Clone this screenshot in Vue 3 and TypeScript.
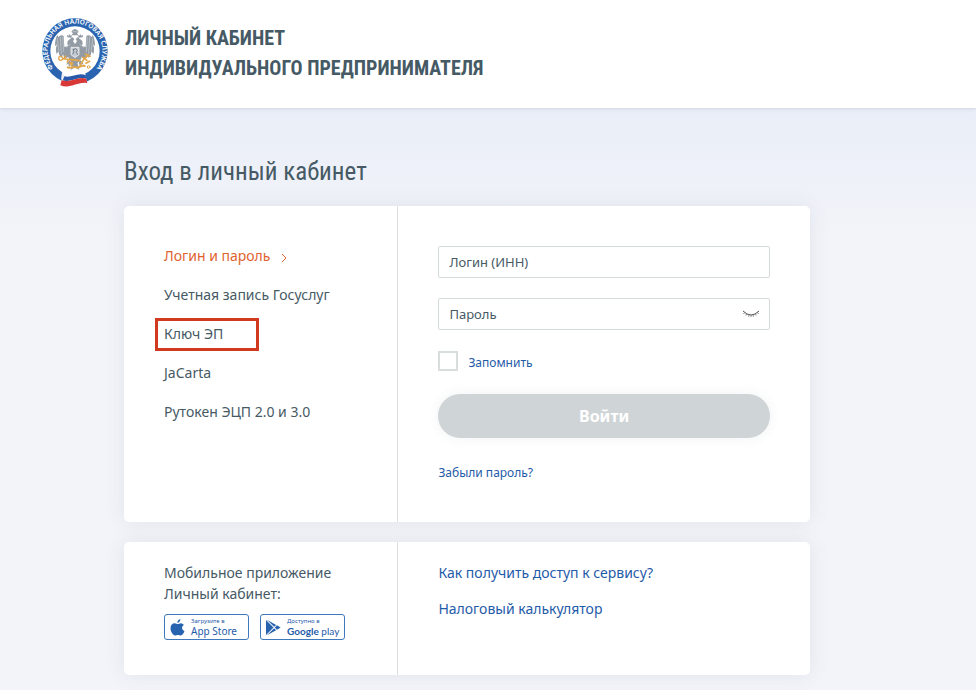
<script setup lang="ts">
import { ref } from 'vue'

interface LoginMethod {
  id: string
  title: string
}

const methods: LoginMethod[] = [
  { id: 'password', title: 'Логин и пароль' },
  { id: 'gosuslugi', title: 'Учетная запись Госуслуг' },
  { id: 'key', title: 'Ключ ЭП' },
  { id: 'jacarta', title: 'JaCarta' },
  { id: 'rutoken', title: 'Рутокен ЭЦП 2.0 и 3.0' },
]

const active = ref('password')
const marked = 'key'
const login = ref('')
const password = ref('')
const remember = ref(false)
const passwordVisible = ref(false)
</script>

<template>
  <div class="page">
    <header class="header">
      <svg class="emblem" viewBox="36 27 198 210" aria-hidden="true">
        <circle cx="135" cy="129" r="98" fill="#2a64b0" />
        <circle cx="135" cy="129" r="74" fill="#fff" />
        <defs>
          <path id="ring" d="M77 187 A82 82 0 1 1 193 187" />
        </defs>
        <text class="ring-text">
          <textPath href="#ring" startOffset="50%" text-anchor="middle">ФЕДЕРАЛЬНАЯ НАЛОГОВАЯ СЛУЖБА</textPath>
        </text>
        <g fill="#939ba5">
          <path d="M120 94 C113 96 110 105 114 114 L103 117 L101 84 C95 79 88 82 85 88 L82 81 C77 90 75 101 75 114 L81 109 C77 119 77 128 80 138 L86 130 C86 139 89 145 94 150 L99 139 L104 153 L115 147 L120 160 L135 169 L150 160 L155 147 L166 153 L171 139 L176 150 C181 145 184 139 184 130 L190 138 C193 128 193 119 189 109 L195 114 C195 101 193 90 188 81 L185 88 C182 82 175 79 169 84 L167 117 L156 114 C160 105 157 96 150 94 L144 87 L137 93 L141 100 L135 108 L129 100 L133 93 L126 87 Z" />
          <path d="M125 82 L129 75 L124 72 L128 66 L135 63 L142 66 L146 72 L141 75 L145 82 Z" />
          <path d="M112 88 L111 80 L116 83 L119 78 L122 83 L126 81 L124 89 Z" />
          <path d="M158 88 L159 80 L154 83 L151 78 L148 83 L144 81 L146 89 Z" />
          <path d="M118 157 L108 170 L115 167 L117 178 L124 165 Z M152 157 L162 170 L155 167 L153 178 L146 165 Z" />
          <path d="M129 160 L122 186 L135 178 L148 186 L141 160 Z" />
        </g>
        <g fill="none" stroke="#c9ced4" stroke-width="2">
          <path d="M82 91 L86 128 M91 86 L94 138 M98 87 L101 132 M188 91 L184 128 M179 86 L176 138 M172 87 L169 132" />
          <path d="M108 119 L121 108 M162 119 L149 108 M128 71 L142 71" />
        </g>
        <path d="M123 118 H147 V140 L135 149 L123 140 Z" fill="#c5cbd2" stroke="#fff" stroke-width="2" />
        <path d="M128 139 L132 130 L129 125 L137 122 L142 127 L139 133 L143 140" fill="none" stroke="#6f7b88" stroke-width="3" />
        <g fill="none" stroke="#e2a74a" stroke-linecap="round">
          <circle cx="92" cy="151" r="6" stroke-width="4" />
          <path d="M99 152 L149 158 M104 153 L107 144 M114 155 L112 162" stroke-width="5" />
          <path d="M113 178 C125 183 129 174 138 178 C149 182 152 169 164 174 M119 166 C126 161 130 166 124 172" stroke-width="6" />
          <path d="M174 143 L162 153 L150 172 M158 148 L171 157 M166 138 L180 145 M179 160 L168 166" stroke-width="5" />
          <circle cx="176" cy="177" r="4" stroke-width="3" />
        </g>
        <path d="M97 189 C118 204 139 181 165 190 L170 221 C146 215 121 240 93 228 Z" fill="#fff" />
        <path d="M97 202 C120 215 140 191 167 201 L169 212 C143 203 120 228 95 216 Z" fill="#2859aa" />
        <path d="M95 216 C120 228 143 203 169 212 L172 226 C147 218 121 245 91 232 Z" fill="#d93936" />
        <path d="M96 192 L103 205 L98 218 L94 212 Z" fill="#e9edf3" />
      </svg>
      <div class="brand">Личный кабинет<br>индивидуального предпринимателя</div>
    </header>

    <main class="content">
      <h1 class="title">Вход в личный кабинет</h1>

      <section class="card login-card">
        <nav class="side">
          <ul class="methods">
            <li v-for="m in methods" :key="m.id" class="method" :class="{ marked: m.id === marked }">
              <a href="#" :class="{ active: m.id === active }" @click.prevent="active = m.id">
                {{ m.title }}
                <svg v-if="m.id === active" class="chevron" viewBox="0 0 6 10" aria-hidden="true">
                  <path d="M1 1 L5 5 L1 9" />
                </svg>
              </a>
            </li>
          </ul>
        </nav>

        <form class="main-col" @submit.prevent>
          <div class="field">
            <input v-model="login" type="text" placeholder="Логин (ИНН)" aria-label="Логин (ИНН)">
          </div>
          <div class="field">
            <input v-model="password" :type="passwordVisible ? 'text' : 'password'" placeholder="Пароль" aria-label="Пароль">
            <button class="eye" type="button" aria-label="Показать пароль" @click="passwordVisible = !passwordVisible">
              <svg viewBox="0 0 18 8" aria-hidden="true">
                <path d="M1 1 Q9 9 17 1" />
                <path class="lashes" d="M2.5 2.5 L1.5 4 M4.5 4 L3.8 5.500 M7 5 L6.600 6.700 M9 5.200 V7 M11 5 L11.400 6.700 M13.500 4 L14.200 5.500 M15.500 2.500 L16.500 4" />
              </svg>
            </button>
          </div>
          <label class="remember">
            <input v-model="remember" type="checkbox">
            <span>Запомнить</span>
          </label>
          <button class="submit" type="submit" :disabled="!login || !password">Войти</button>
          <a class="forgot" href="#">Забыли пароль?</a>
        </form>
      </section>

      <section class="card info-card">
        <div class="side">
          <p class="apps-text">Мобильное приложение<br>Личный кабинет:</p>
          <div class="badges">
            <a class="badge" href="#">
              <svg viewBox="0 0 14 17" aria-hidden="true">
                <path d="M9.9 0 C10 1.8 8.6 3.8 6.8 4 C6.6 2.2 8.2 .3 9.9 0 Z M10.2 4.300 C11.500 4.300 12.700 5 13.300 6 C10.700 7.500 11.100 11 14 12 C13.200 14.200 11.800 16.500 10.300 16.500 C9.200 16.500 8.800 15.900 7.500 15.900 C6.200 15.900 5.700 16.500 4.700 16.500 C2.400 16.500 0 12.500 0 9.300 C0 6.100 2 4.300 4.200 4.300 C5.500 4.300 6.400 5.100 7.300 5.100 C8.200 5.100 9 4.300 10.200 4.300 Z" />
              </svg>
              <span class="badge-text"><small>Загрузите в</small><span>App Store</span></span>
            </a>
            <a class="badge" href="#">
              <svg viewBox="0 0 16 17" aria-hidden="true">
                <path d="M0 .6 L8 8.500 L0 16.400 Z M1 .3 L10.800 5.700 L8.700 7.800 Z M1 16.700 L10.800 11.300 L8.700 9.200 Z M11.700 6.200 L15.600 8.500 L11.700 10.800 L9.400 8.500 Z" />
              </svg>
              <span class="badge-text"><small>Доступно в</small><span class="play"><b>Google</b> play</span></span>
            </a>
          </div>
        </div>
        <div class="main-col links">
          <a href="#">Как получить доступ к сервису?</a>
          <a href="#">Налоговый калькулятор</a>
        </div>
      </section>
    </main>
  </div>
</template>

<style>
body {
  background: #f3f4f9;
}
</style>

<style scoped>
*,
*::after {
  box-sizing: border-box;
}

.page {
  font-family: "Noto Sans", "Open Sans", sans-serif;
  font-size: 14px;
  line-height: 21px;
  color: #465a65;
  background: linear-gradient(#e9eef8 108px, #f3f4f9 240px);
}

a {
  color: #1f5ba9;
  text-decoration: none;
}

.header {
  display: flex;
  gap: 17px;
  padding: 17px 42px 21px;
  background: #fff;
  box-shadow: 0 0 4px rgba(70, 90, 120, 0.25);
}

.emblem {
  width: 66px;
  height: 70px;
}

.ring-text {
  font: 600 20px "Noto Sans", sans-serif;
  fill: #fff;
}

.brand {
  padding-top: 6px;
  font: 700 20px/30px "Roboto Condensed", "Liberation Sans Narrow", "Liberation Sans", sans-serif;
  text-transform: uppercase;
}

.content {
  max-width: 934px;
  padding: 48px 124px 15px;
}

.title {
  margin: 0 0 18px;
  font: 400 25px/32px "Roboto Condensed", "Liberation Sans Narrow", "Liberation Sans", sans-serif;
}

.card {
  display: grid;
  grid-template-columns: 2fr 3fr;
  width: 100%;
  max-width: 686px;
  background: #fff;
  border-radius: 5px;
  box-shadow: 0 0 20px rgba(70, 90, 110, 0.1);
}

.side {
  padding: 39px 0 40px 40px;
  border-right: 1px solid #dcdfe0;
}

.main-col {
  display: flex;
  flex-direction: column;
  align-items: flex-start;
  padding: 40px;
}

.methods {
  display: grid;
  gap: 18px;
  margin: 0;
  padding: 0;
  list-style: none;
}

.method {
  position: relative;
  justify-self: start;
}

.method a {
  color: inherit;
}

.method a.active {
  color: #e0622f;
}

.chevron {
  width: 6px;
  height: 10px;
  margin-left: 7px;
  vertical-align: -2px;
  fill: none;
  stroke: currentColor;
}

.marked::after {
  content: "";
  position: absolute;
  top: -5px;
  left: -9px;
  width: 104px;
  height: 33px;
  border: 3px solid #d23a20;
  pointer-events: none;
}

.field {
  position: relative;
  width: 100%;
  margin-bottom: 20px;
}

.field input {
  display: block;
  width: 100%;
  height: 32px;
  padding: 0 40px 0 10px;
  border: 1px solid #d5dbdb;
  border-radius: 2px;
  background: #fff;
  color: #465a65;
  font: 13px "Noto Sans", sans-serif;
}

.field input::placeholder {
  color: #465a65;
  opacity: 1;
}

.eye {
  position: absolute;
  top: 8px;
  right: 10px;
  display: flex;
  padding: 4px 0;
  border: 0;
  background: none;
}

.eye svg {
  width: 18px;
  height: 8px;
  fill: none;
  stroke: #555;
}

.eye .lashes {
  stroke-width: 0.7;
}

.remember {
  display: flex;
  align-items: flex-start;
  gap: 10px;
  margin-top: 1px;
  margin-bottom: 20px;
  color: #1f5ba9;
  font-size: 12px;
  line-height: 23px;
}

.remember input {
  appearance: none;
  width: 20px;
  height: 20px;
  margin: 0;
  border: 2px solid #d8dddd;
  background: #fff;
}

.remember input:checked {
  background: #1f5ba9;
}

.submit {
  width: 100%;
  height: 44px;
  margin-bottom: 26px;
  border: 0;
  border-radius: 22px;
  background: #cfd4d6;
  box-shadow: 0 0 12px rgba(70, 90, 110, 0.08);
  color: #fff;
  font: 700 16px "Noto Sans", sans-serif;
}

.forgot {
  font-size: 12px;
  line-height: 18px;
}

.info-card {
  margin-top: 20px;
}

.info-card .side {
  padding-top: 20px;
  padding-bottom: 35px;
}

.apps-text {
  margin: 0 0 10px;
}

.badges {
  display: flex;
  gap: 11px;
}

.badge {
  display: flex;
  align-items: center;
  gap: 6px;
  width: 85px;
  height: 26px;
  padding-left: 5px;
  border: 1px solid #3f78bd;
  border-radius: 3px;
}

.badge svg {
  width: 15px;
  height: 17px;
  fill: #2763af;
}

.badge-text {
  display: flex;
  flex-direction: column;
  font-size: 10px;
  line-height: 12px;
  white-space: nowrap;
}

.badge-text small {
  font-size: 6px;
  line-height: 8px;
}

.play {
  font-family: Lato, "Noto Sans", sans-serif;
}

.links {
  gap: 15px;
  padding-top: 20px;
}
</style>
